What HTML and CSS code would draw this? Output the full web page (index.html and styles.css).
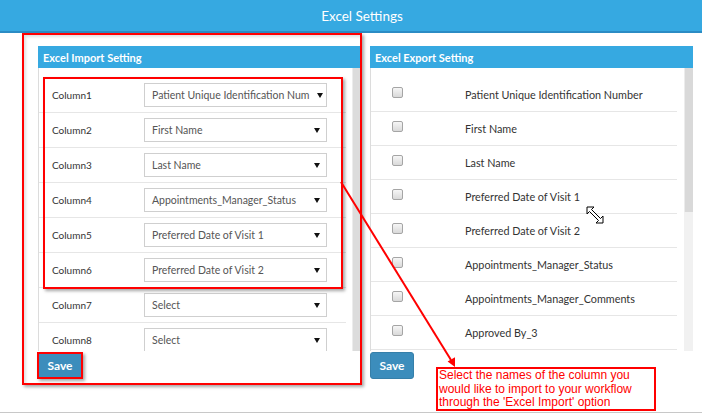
FILE: index.html
```html
<!DOCTYPE html>
<html>
<head>
<meta charset="utf-8">
<link rel="stylesheet" href="styles.css">
</head>
<body>
<div class="header"><span>Excel Settings</span></div>
<div class="main">
  <section class="import-box">
    <div class="panel import">
      <div class="panel-head">Excel Import Setting</div>
      <div class="panel-body">
        <div class="rows">
          <div class="row"><span class="label">Column1</span><div class="select"><span class="val">Patient Unique Identification Num</span><i class="caret"></i></div></div>
          <div class="row"><span class="label">Column2</span><div class="select"><span class="val">First Name</span><i class="caret"></i></div></div>
          <div class="row"><span class="label">Column3</span><div class="select"><span class="val">Last Name</span><i class="caret"></i></div></div>
          <div class="row"><span class="label">Column4</span><div class="select"><span class="val">Appointments_Manager_Status</span><i class="caret"></i></div></div>
          <div class="row"><span class="label">Column5</span><div class="select"><span class="val">Preferred Date of Visit 1</span><i class="caret"></i></div></div>
          <div class="row"><span class="label">Column6</span><div class="select"><span class="val">Preferred Date of Visit 2</span><i class="caret"></i></div></div>
          <div class="row"><span class="label">Column7</span><div class="select"><span class="val">Select</span><i class="caret"></i></div></div>
          <div class="row"><span class="label">Column8</span><div class="select"><span class="val">Select</span><i class="caret"></i></div></div>
        </div>
        <div class="track track-left"></div>
      </div>
    </div>
    <button class="btn btn-marked">Save</button>
  </section>
  <section class="export-col">
    <div class="panel export">
      <div class="panel-head">Excel Export Setting</div>
      <div class="panel-body">
        <div class="rows">
          <div class="erow"><span class="check"></span><span class="etext">Patient Unique Identification Number</span></div>
          <div class="erow"><span class="check"></span><span class="etext">First Name</span></div>
          <div class="erow"><span class="check"></span><span class="etext">Last Name</span></div>
          <div class="erow"><span class="check"></span><span class="etext">Preferred Date of Visit 1</span></div>
          <div class="erow"><span class="check"></span><span class="etext">Preferred Date of Visit 2</span></div>
          <div class="erow"><span class="check"></span><span class="etext">Appointments_Manager_Status</span></div>
          <div class="erow"><span class="check"></span><span class="etext">Appointments_Manager_Comments</span></div>
          <div class="erow"><span class="check"></span><span class="etext">Approved By_3</span></div>
        </div>
        <div class="track track-right"><div class="thumb"></div></div>
      </div>
    </div>
    <button class="btn">Save</button>
  </section>
</div>
<div class="focus-box"></div>
<svg class="arrow" width="702" height="415" viewBox="0 0 702 415">
  <line x1="341" y1="182" x2="451" y2="360" stroke="#f00" stroke-width="2"/>
  <polygon points="455,367 447.6,361.6 455,357.2" fill="#f00"/>
</svg>
<div class="callout">Select the names of the column you would like to import to your workflow through the 'Excel Import' option</div>
<svg class="cursor" width="19" height="18" viewBox="0 0 19 18">
  <polygon points="1,1 8,1 5.5,3.5 14.5,12.5 17,10 17,17 10,17 12.5,14.5 3.5,5.5 1,8" fill="#fff" stroke="#000" stroke-width="1"/>
</svg>
</body>
</html>
```
FILE: styles.css
```css
body {
  margin: 0;
  width: 702px;
  height: 415px;
  overflow: hidden;
  position: relative;
  background: #fff;
  font-family: Lato, "Liberation Sans", sans-serif;
}

.header {
  height: 31px;
  background: #36a9e1;
  border-bottom: 2px solid #2b8cc4;
  color: #fff;
  display: flex;
  align-items: center;
  justify-content: center;
  padding-left: 22px;
  font-size: 13.5px;
}

.main {
  display: flex;
  gap: 8px;
  padding-left: 22px;
  height: 379px;
  border-bottom: 1px solid #c8c8c8;
}

.import-box {
  box-sizing: border-box;
  width: 340px;
  height: 352px;
  border: 2px solid #f00;
  padding: 11px 0 0 14px;
  box-shadow: 2px 2px 3px rgba(0, 0, 0, 0.35), inset 2px 2px 3px rgba(0, 0, 0, 0.12);
}

.export-col {
  margin-top: 13px;
  width: 323px;
}

.panel-head {
  height: 22px;
  background: #36a9e1;
  color: #fff;
  font-weight: 700;
  font-size: 11px;
  padding-left: 5px;
  display: flex;
  align-items: center;
}

.panel-body {
  height: 283px;
  box-sizing: border-box;
  display: flex;
  border-left: 1px solid #dcdcdc;
  overflow: hidden;
}

.import { width: 322px; }
.export { width: 323px; }

.import .rows {
  flex: none;
  width: 307px;
  margin-right: 6px;
  padding-top: 10px;
}

.export .rows {
  flex: none;
  width: 306px;
  margin-right: 7px;
  padding-top: 10px;
}

.row {
  height: 34px;
  border-bottom: 1px solid #e6e6e6;
  display: flex;
  align-items: center;
  flex: none;
}

.label {
  width: 105px;
  box-sizing: border-box;
  padding-left: 13px;
  font-size: 10px;
  color: #333;
}

.select {
  width: 183px;
  height: 24px;
  box-sizing: border-box;
  border: 1px solid #cfcfcf;
  display: flex;
  align-items: center;
  padding: 0 6px 0 7px;
  gap: 8px;
  font-size: 10.5px;
  color: #555;
}

.val {
  flex: 1;
  white-space: nowrap;
}

.caret {
  width: 0;
  height: 0;
  border-left: 3px solid transparent;
  border-right: 3px solid transparent;
  border-top: 5px solid #111;
}

.erow {
  height: 33px;
  border-bottom: 1px solid #e6e6e6;
  display: flex;
  align-items: center;
}

.check {
  width: 11px;
  height: 11px;
  box-sizing: border-box;
  margin-left: 21px;
  margin-bottom: 4px;
  border: 1px solid #a5a5a5;
  border-radius: 2px;
  background: linear-gradient(#f6f6f6, #d9d9d9);
}

.etext {
  margin-left: 62px;
  font-size: 10.8px;
  color: #333;
}

.track {
  flex: none;
  height: 100%;
}

.track-left {
  width: 8px;
  background: #dcdcdc;
  border-left: 1px solid #ececec;
  box-sizing: border-box;
}

.track-right {
  width: 9px;
  background: #f1f1f1;
}

.thumb {
  height: 144px;
  background: #d9d9d9;
  border-left: 1px solid #ececec;
}

.btn {
  display: block;
  margin-top: 1px;
  width: 44px;
  height: 27px;
  padding: 0;
  background: #3c8dbc;
  border: 1px solid #367fa9;
  border-radius: 3px;
  color: #fff;
  font-family: Lato, "Liberation Sans", sans-serif;
  font-size: 12px;
  font-weight: 700;
}

.btn-marked {
  width: 46px;
  margin-left: -1px;
  border: 2px solid #f00;
  border-radius: 0;
  box-shadow: 2px 2px 3px rgba(0, 0, 0, 0.35);
}

.focus-box {
  position: absolute;
  left: 43px;
  top: 77px;
  width: 300px;
  height: 212px;
  box-sizing: border-box;
  border: 2px solid #f00;
  box-shadow: 2px 2px 3px rgba(0, 0, 0, 0.35);
}

.arrow {
  position: absolute;
  left: 0;
  top: 0;
  pointer-events: none;
}

.callout {
  position: absolute;
  left: 436px;
  top: 367px;
  width: 220px;
  height: 44px;
  box-sizing: border-box;
  border: 2px solid #f00;
  background: #fff;
  color: #f00;
  padding: 0 1px;
  font-family: "Liberation Sans", Arial, sans-serif;
  font-size: 12px;
  line-height: 13.5px;
}

.cursor {
  position: absolute;
  left: 586px;
  top: 206px;
}
```
